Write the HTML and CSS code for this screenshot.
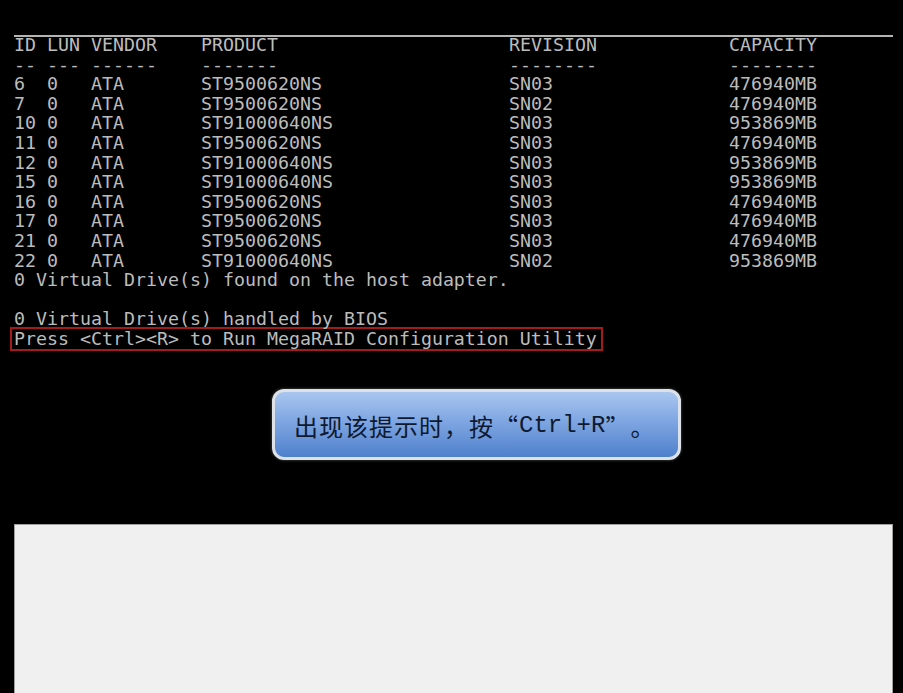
FILE: index.html
```html
<!DOCTYPE html>
<html lang="en">
  <head>
    <meta charset="UTF-8" />
    <meta name="viewport" content="width=device-width, initial-scale=1.0" />
    <title>MegaRAID BIOS</title>
    <link rel="stylesheet" href="styles.css">
  </head>
  <body>
    <div class="rule"></div>
    <div class="term">
      <div class="row"><span>ID</span><span>LUN</span><span>VENDOR</span><span>PRODUCT</span><span>REVISION</span><span>CAPACITY</span></div>
      <div class="row"><span>--</span><span>---</span><span>------</span><span>-------</span><span>--------</span><span>--------</span></div>
      <div class="row"><span>6</span><span>0</span><span>ATA</span><span>ST9500620NS</span><span>SN03</span><span>476940MB</span></div>
      <div class="row"><span>7</span><span>0</span><span>ATA</span><span>ST9500620NS</span><span>SN02</span><span>476940MB</span></div>
      <div class="row"><span>10</span><span>0</span><span>ATA</span><span>ST91000640NS</span><span>SN03</span><span>953869MB</span></div>
      <div class="row"><span>11</span><span>0</span><span>ATA</span><span>ST9500620NS</span><span>SN03</span><span>476940MB</span></div>
      <div class="row"><span>12</span><span>0</span><span>ATA</span><span>ST91000640NS</span><span>SN03</span><span>953869MB</span></div>
      <div class="row"><span>15</span><span>0</span><span>ATA</span><span>ST91000640NS</span><span>SN03</span><span>953869MB</span></div>
      <div class="row"><span>16</span><span>0</span><span>ATA</span><span>ST9500620NS</span><span>SN03</span><span>476940MB</span></div>
      <div class="row"><span>17</span><span>0</span><span>ATA</span><span>ST9500620NS</span><span>SN03</span><span>476940MB</span></div>
      <div class="row"><span>21</span><span>0</span><span>ATA</span><span>ST9500620NS</span><span>SN03</span><span>476940MB</span></div>
      <div class="row"><span>22</span><span>0</span><span>ATA</span><span>ST91000640NS</span><span>SN02</span><span>953869MB</span></div>
      <div class="line">0 Virtual Drive(s) found on the host adapter.</div>
      <div class="blank"></div>
      <div class="line">0 Virtual Drive(s) handled by BIOS</div>
      <div class="line prompt">Press &lt;Ctrl&gt;&lt;R&gt; to Run MegaRAID Configuration Utility</div>
    </div>

    <div class="callout-row">
      <div class="callout">出现该提示时，按“<span class="key">Ctrl+R</span>”。</div>
    </div>

    <div class="panel"></div>
  </body>
</html>
```

FILE: styles.css
```css
* {
  margin: 0;
  padding: 0;
  box-sizing: border-box;
}

body {
  height: 100vh;
  display: flex;
  flex-direction: column;
  padding: 35px 10px 0 14px;
  background-color: black;
  overflow: hidden;
}

.rule {
  border-top: 2px solid #b4b4b4;
}

.term {
  margin-top: -2px;
  font-family: "DejaVu Sans Mono", "Liberation Mono", monospace;
  font-size: 18.27px;
  line-height: 19.6px;
  color: #bcbcbc;
  white-space: nowrap;
}

.row {
  display: grid;
  grid-template-columns: 33px 44px 110px 308px 220px auto;
}

.blank {
  height: 19.6px;
}

.prompt {
  width: fit-content;
  margin: -2px 0 0 -4px;
  padding: 0 4px 0 2px;
  border: 2px solid #a31b1b;
}

.callout-row {
  margin-top: 38px;
  padding-left: 258px;
}

.callout {
  width: 409px;
  height: 71px;
  display: flex;
  align-items: center;
  padding: 3px 0 0 19px;
  border: 3px solid #dde2ea;
  border-radius: 12px;
  background: linear-gradient(#a9c6ef, #7fa6e2 45%, #4f80cc);
  box-shadow: 0 0 3px rgba(255, 255, 255, 0.35);
  font-family: "Noto Sans CJK SC", sans-serif;
  font-size: 24px;
  letter-spacing: 1px;
  text-spacing-trim: space-all;
  font-feature-settings: "fwid";
  color: #0f1a30;
}

.callout .key {
  font-family: "Liberation Mono", monospace;
  font-feature-settings: normal;
  letter-spacing: 0;
}

.panel {
  flex: 1;
  margin-top: 64px;
  background-color: #f0f0f0;
  border: 1px solid #a0a0a0;
  border-bottom: none;
}
```
